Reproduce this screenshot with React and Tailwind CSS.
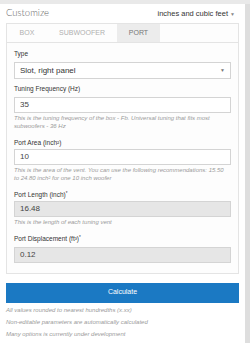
import React from "react";

const Star = () => <span className="text-[4.5px] align-top leading-[6px]">*</span>;

const FIELDS = [
  {
    label: "Tuning Frequency (Hz)",
    value: "35",
    help: "This is the tuning frequency of the box - Fb. Universal tuning that fits most subwoofers - 36 Hz",
    gap: "mt-[6px]",
    lab: "mb-[4px]",
  },
  {
    label: "Port Area (inch²)",
    value: "10",
    help: "This is the area of the vent. You can use the following recommendations: 15.50 to 24.80 inch² for one 10 inch woofer",
    gap: "mt-[5px]",
    lab: "mb-[2px]",
  },
  {
    label: <>Port Length (inch)<Star /></>,
    value: "16.48",
    help: "This is the length of each tuning vent",
    locked: true,
    gap: "mt-[5px]",
    lab: "mb-[2px]",
  },
  {
    label: <>Port Displacement (ft³)<Star /></>,
    value: "0.12",
    locked: true,
    gap: "mt-[4px]",
    lab: "mb-[4px]",
  },
];

const NOTES = [
  "All values rounded to nearest hundredths (x.xx)",
  "Non-editable parameters are automatically calculated",
  "Many options is currently under development",
];

function Field({ label, value, help, locked, gap, lab }) {
  return (
    <div className={gap}>
      <div className={`text-[6.5px] text-[#333] leading-[8px] ${lab}`}>{label}</div>
      <div className={`h-[16px] border border-[#d4d4d4] flex items-center px-[5px] text-[8px] text-[#444] ${locked ? "bg-[#e6e6e6]" : "bg-white"}`}>
        {value}
      </div>
      {help && <div className="mt-[2px] pb-[4px] text-[6px] leading-[7.5px] italic text-[#9a9a9a] pr-[6px]">{help}</div>}
    </div>
  );
}

export default function App() {
  return (
    <div className="w-[250px] h-[343px] bg-[#e9e9e9] pt-[4px] flex overflow-hidden" style={{ fontFamily: "'Liberation Sans', Arial, sans-serif" }}>
      <div className="w-[245px] bg-white px-[6px]">
        <div className="flex items-center justify-between h-[19px] pr-[4px]">
          <span className="text-[9.5px] text-[#666] font-light" style={{ fontFamily: "Lato, sans-serif" }}>Customize</span>
          <span className="text-[7.5px] text-[#333]">inches and cubic feet <span className="text-[5px] text-[#888]">▼</span></span>
        </div>

        <div className="border border-[#e4e4e4] bg-[#fdfdfd]">
          <div className="flex h-[19px] border-b border-[#e4e4e4] text-[7px] uppercase">
            <div className="w-[40px] grid place-items-center text-[#b0b0b0]">Box</div>
            <div className="w-[70px] grid place-items-center text-[#b0b0b0]">Subwoofer</div>
            <div className="w-[43px] grid place-items-center text-[#777] bg-[#ececec]">Port</div>
          </div>

          <div className="px-[7px] pt-[7px] pb-[10px]">
            <div>
              <div className="text-[6.5px] text-[#333] leading-[8px] mb-[4px]">Type</div>
              <div className="h-[17px] border border-[#d4d4d4] bg-white flex items-center justify-between px-[5px] text-[8px] text-[#333]">
                <span>Slot, right panel</span>
                <span className="text-[5px] text-[#777]">▼</span>
              </div>
            </div>
            {FIELDS.map((f, i) => (
              <Field key={i} {...f} />
            ))}
          </div>
        </div>

        <button className="mt-[9px] w-full h-[20px] bg-[#1b79c3] text-white text-[7px] block">Calculate</button>

        <div className="mt-[1px] flex flex-col">
          {NOTES.map((n) => (
            <div key={n} className="text-[6px] leading-[12px] italic text-[#9a9a9a]">{n}</div>
          ))}
        </div>
      </div>
      <div className="flex-1 bg-[#dedede]" />
    </div>
  );
}
